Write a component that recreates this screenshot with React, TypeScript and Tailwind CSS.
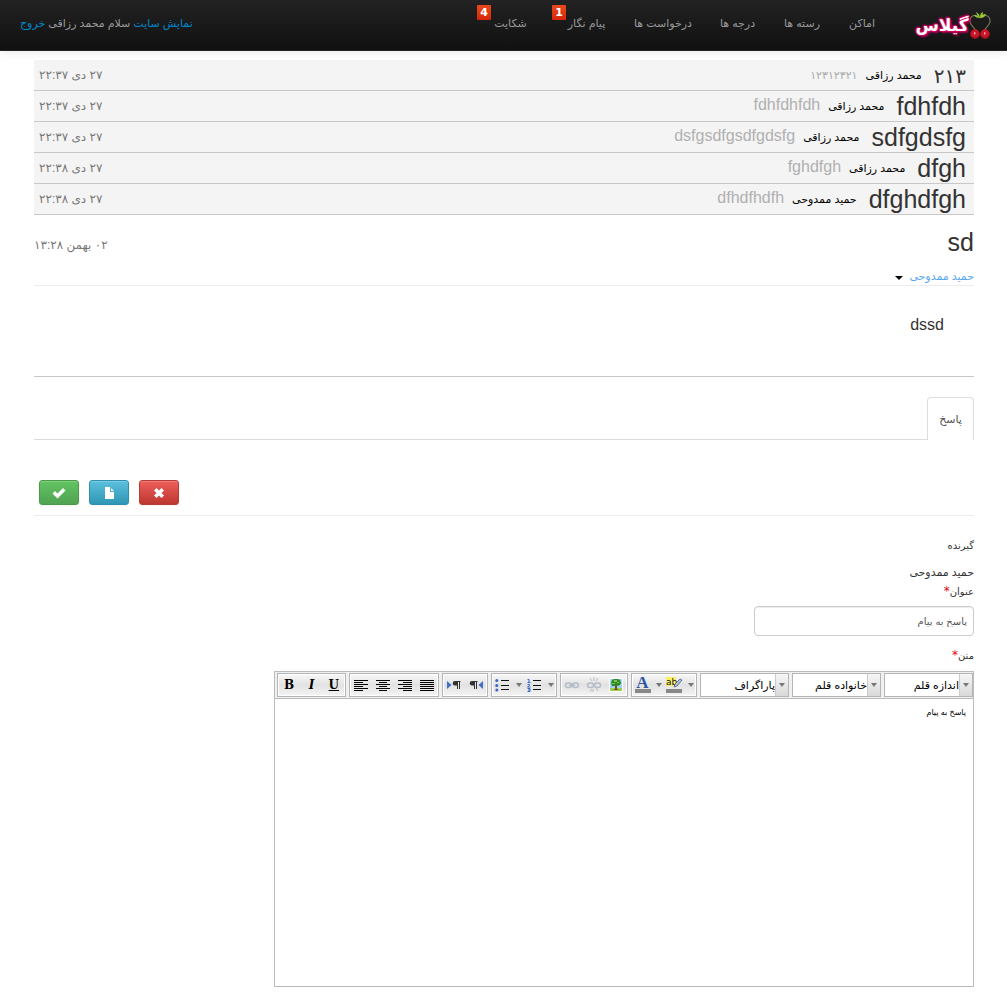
import React from "react";

const navItems = [
  { label: "اماکن", width: "w-[56px]" },
  { label: "رسته ها", width: "w-[64px]" },
  { label: "درجه ها", width: "w-[65px]" },
  { label: "درخواست ها", width: "w-[84px]" },
  { label: "پیام نگار", width: "w-[69px]", badge: "1" },
  { label: "شکایت", width: "w-[75px] pr-2", badge: "4" },
];

const messages = [
  { title: "۲۱۳", sender: "محمد رزاقی", body: "۱۲۳۱۲۳۲۱", date: "۲۷ دی ۲۲:۳۷", fa: true },
  { title: "fdhfdh", sender: "محمد رزاقی", body: "fdhfdhfdh", date: "۲۷ دی ۲۲:۳۷" },
  { title: "sdfgdsfg", sender: "محمد رزاقی", body: "dsfgsdfgsdfgdsfg", date: "۲۷ دی ۲۲:۳۷" },
  { title: "dfgh", sender: "محمد رزاقی", body: "fghdfgh", date: "۲۷ دی ۲۲:۳۸" },
  { title: "dfghdfgh", sender: "حمید ممدوحی", body: "dfhdfhdfh", date: "۲۷ دی ۲۲:۳۸" },
];

function Cherries() {
  return (
    <svg width="22" height="30" viewBox="0 0 22 30" aria-hidden="true">
      <path d="M11 8C6 3 1 6 1 11c0 5 6 7 7 12M11 8c5-5 10-2 10 3 0 5-6 7-7 12" fill="none" stroke="#77765a" strokeWidth="1.2" />
      <path d="M11 8C9 7 8 5 7 2c2 1 4 3 4 6zM11 8c1-3 3-4 6-4-1 3-3 4-6 4zM10 8C8 8 6 7 5 5c2 0 4 1 5 3zM11 7c0-3 1-4 3-5 0 3-1 4-3 5z" fill="#9aca2c" />
      <circle cx="6" cy="24" r="4.7" fill="#cc1526" />
      <circle cx="16" cy="24" r="4.7" fill="#cc1526" />
      <path d="M2 26a4.700 4.700 0 0 0 8 0M12 26a4.700 4.700 0 0 0 8 0" fill="none" stroke="#86101c" strokeWidth="1.200" />
      <path d="M5 22l2 1-2 2zM15 22l2 1-2 2z" fill="#ffb0b4" />
    </svg>
  );
}

function Group({ width, children }: { width: string; children: React.ReactNode }) {
  return (
    <div className={`${width} flex h-6 shrink-0 items-center justify-around border border-[#b5b5b5] bg-linear-to-b from-[#f8f8f8] via-[#e2e2e2] to-[#f4f4f4] shadow-[inset_0_0_0_1px_#fff]`}>
      {children}
    </div>
  );
}

function Tool({ name, children, narrow }: { name: string; children: React.ReactNode; narrow?: boolean }) {
  return (
    <button type="button" aria-label={name} title={name} className={`${narrow ? "w-2.5" : "w-5"} flex h-5 items-center justify-center`}>
      {children}
    </button>
  );
}

function Arrow() {
  return (
    <svg width="6" height="4" viewBox="0 0 6 4" aria-hidden="true">
      <path d="M0 0h6L3 4z" fill="#777" />
    </svg>
  );
}

function Lines({ rows }: { rows: number[][] }) {
  return (
    <svg width="14" height="11" viewBox="0 0 14 11" shapeRendering="crispEdges" aria-hidden="true">
      {rows.map(([x, w], i) => (
        <rect key={i} x={x} y={i * 2} width={w} height="1" fill="#000" />
      ))}
    </svg>
  );
}

function Pilcrow({ flip }: { flip?: boolean }) {
  return (
    <svg width="14" height="10" viewBox="0 0 14 10" aria-hidden="true">
      <path d={flip ? "M14 1v8L9.500 5z" : "M0 1v8l4.500-4z"} fill="#3f6fc4" />
      <path d={flip ? "M7.500 1v8M5.500 1v8" : "M12.500 1v8M10.500 1v8"} stroke="#333" />
      <path d={flip ? "M8.500 1H3a2.300 2.300 0 0 0 0 4.600h2V2h3.500z" : "M13.500 1H8a2.300 2.300 0 0 0 0 4.600h2V2h3.500z"} fill="#333" />
    </svg>
  );
}

function List({ numbered }: { numbered?: boolean }) {
  return (
    <svg width="15" height="14" viewBox="0 0 15 14" aria-hidden="true">
      <path d="M6 2.500h8M6 7.500h8M6 11.500h8" stroke="#111" />
      {numbered ? (
        <path d="M.5 1.500H2V4M.5 4.500h3M.5 6.500h2v1l-2 1.500h3M.5 10.500h2.500v1.500H1M3 12v1.500H.5" fill="none" stroke="#3567c4" />
      ) : (
        <g fill="#3567c4">
          <circle cx="1.800" cy="2.500" r="1.500" />
          <circle cx="1.800" cy="7.500" r="1.500" />
          <circle cx="1.800" cy="12" r="1.500" />
        </g>
      )}
    </svg>
  );
}

function Link({ broken }: { broken?: boolean }) {
  return (
    <svg width="16" height="16" viewBox="0 0 16 16" fill="none" stroke="#b4bcc8" aria-hidden="true">
      <rect x="1.500" y="6" width="6" height="4.500" rx="2.200" strokeWidth="1.400" />
      <rect x="8.500" y="6" width="6" height="4.500" rx="2.200" strokeWidth="1.400" />
      {broken ? <path d="M8 0v4M4 1l2 3M12 1l-2 3M7 12v3M4 15l2-3M12 14l-2-3" /> : <path d="M5 8.300h6" strokeWidth="1.500" />}
    </svg>
  );
}

function Tree() {
  return (
    <svg width="14" height="14" viewBox="0 0 14 14" className="shrink-0" aria-hidden="true">
      <path fill="#fff" d="M0 0h14v14H0z" />
      <path fill="#9fd2f7" d="M1 1h12v9H1z" />
      <path fill="#9ed04f" d="M1 10h12v3H1z" />
      <path fill="#7a4a22" d="M6 7h2v4l2 1H4l2-1z" />
      <path fill="#2f8a26" d="M5 1h4l2 1 1 3-1 2-3 1H6L3 8 2 5l1-3z" />
      <path fill="#79c64a" d="M5 2h3v2H5zM8 4h2v1H8zM3 5h3v1H3z" />
    </svg>
  );
}

function Highlight() {
  return (
    <svg width="17" height="16" viewBox="0 0 17 16" aria-hidden="true">
      <path fill="#fbf06a" d="M0 0h10v9H0z" />
      <text x="0" y="8" fontSize="9" fontFamily="DejaVu Sans" fill="#111">ab</text>
      <path fill="#a9c3df" stroke="#45617f" strokeWidth=".8" d="M14 2l2 1-5 6-3 1 1-3z" />
      <path fill="#888" d="M0 12h16v4H0z" />
    </svg>
  );
}

function Picker({ id, label }: { id: string; label: string }) {
  return (
    <div className="flex h-6 w-[89px] shrink-0 items-stretch border border-[#b5b5b5] bg-white" dir="rtl">
      <span className="flex w-[13px] shrink-0 items-center justify-center border-l border-[#ccc] bg-linear-to-b from-[#f6f6f6] to-[#d9d9d9]">
        <Arrow />
      </span>
      <select id={id} aria-label={label} className="min-w-0 flex-1 appearance-none bg-white text-[11px] text-black outline-none">
        <option>{label}</option>
      </select>
    </div>
  );
}

const actionBase = "flex h-[25px] w-10 items-center justify-center rounded-[3px] border text-white shadow-[inset_0_1px_0_rgba(255,255,255,.2),0_1px_2px_rgba(0,0,0,.05)]";

export default function App() {
  return (
    <div dir="rtl" className="min-h-screen bg-white font-['Liberation_Sans','DejaVu_Sans',sans-serif] text-[11px] leading-5 text-[#333]">
      <header className="flex h-[51px] items-start justify-between border-b border-[#252525] bg-linear-to-b from-[#222] to-[#111] pr-4 pl-5 text-[#999] shadow-[0_1px_10px_rgba(0,0,0,.1)]">
        <div className="flex items-start">
          <a href="#home" className="flex items-start pt-2.5" aria-label="گیلاس">
            <Cherries />
            <span className="w-[54px] pt-1 text-center text-[17px] leading-6 font-bold whitespace-nowrap text-white [text-shadow:1px_0_1px_#d4005f,-1px_0_1px_#d4005f,0_1px_1px_#d4005f,0_-1px_1px_#d4005f,2px_2px_2px_#b00058,-1px_-1px_2px_#d4005f]">گیلاس</span>
          </a>
          <nav className="mr-[25px] flex">
            {navItems.map((item) => (
              <a key={item.label} href="#nav" className={`${item.width} relative pt-[13px] text-center whitespace-nowrap`}>
                {item.label}
                {item.badge && (
                  <span className="absolute top-[5px] left-0 h-[15px] w-3.5 rounded-[1px] bg-linear-to-b from-[#e8481c] to-[#d62408] text-center font-['DejaVu_Sans'] text-[11px] leading-[15px] font-bold text-white">{item.badge}</span>
                )}
              </a>
            ))}
          </nav>
        </div>
        <div className="pt-[13px] whitespace-nowrap">
          <a href="#site" className="text-[#08c]">نمایش سایت</a> سلام محمد رزاقی <a href="#exit" className="text-[#08c]">خروج</a>
        </div>
      </header>

      <main className="pt-[9px] pr-[33px] pl-[34px]">
        <ul>
          {messages.map((m, i) => (
            <li key={i} className="flex h-[31px] items-center border-b border-[#c8c8c8] bg-[#f4f4f4] pr-2 pl-[5px]">
              <h3 className={m.fa ? "pt-0.5 text-xl leading-7" : "text-[25px] leading-[30px]"}>{m.title}</h3>
              <span className="mr-3 text-black">{m.sender}</span>
              <span className={m.fa ? "mr-2 text-[11px] text-[#aaa]" : "mr-2 pb-0.5 text-base leading-5 text-[#b0b0b0]"}>{m.body}</span>
              <time className="mr-auto text-xs leading-5 text-[#777]">{m.date}</time>
            </li>
          ))}
        </ul>

        <section className="border-b border-[#c8c8c8]">
          <div className="flex items-start justify-between pt-3">
            <h3 className="text-[25px] leading-[31px]">sd</h3>
            <time className="pt-2 text-xs leading-5 text-[#777]">۰۲ بهمن ۱۳:۲۸</time>
          </div>
          <div className="flex h-7 items-center gap-1.5 border-b border-[#eee] pt-2">
            <a href="#sender" className="text-[#5ba7ee]">حمید ممدوحی</a>
            <button type="button" aria-label="گزینه ها" className="pt-1">
              <svg width="8" height="4" viewBox="0 0 8 4" className="block" aria-hidden="true"><path d="M0 0h8L4 4z" fill="#000" /></svg>
            </button>
          </div>
          <p className="h-[90px] pt-[29px] pr-[30px] text-base leading-5">dssd</p>
        </section>

        <div className="mt-5 flex h-[43px] border-b border-[#ddd]" role="tablist">
          <button type="button" role="tab" aria-selected="true" className="-mb-px h-[43px] w-[47px] rounded-t border border-b-0 border-[#ddd] bg-white text-[#555]">پاسخ</button>
        </div>

        <div className="flex justify-end gap-2.5 border-b border-[#eee] pt-10 pb-2.5 pl-[5px]">
          <button type="button" aria-label="حذف" className={`${actionBase} border-[#b53b36] bg-linear-to-b from-[#ee5f5b] to-[#bd362f]`}>
            <svg width="12" height="12" viewBox="0 0 12 12" aria-hidden="true"><path d="M3.500 1L6 3.500 8.500 1 11 3.500 8.500 6 11 8.500 8.500 11 6 8.500 3.500 11 1 8.500 3.500 6 1 3.500z" fill="#fff" /></svg>
          </button>
          <button type="button" aria-label="پیش نویس" className={`${actionBase} border-[#2f8fae] bg-linear-to-b from-[#5bc0de] to-[#2f96b4]`}>
            <svg width="9" height="12" viewBox="0 0 9 12" aria-hidden="true"><path d="M0 0h5v5h4v7H0zM6 1l3 3H6z" fill="#fff" /></svg>
          </button>
          <button type="button" aria-label="ارسال" className={`${actionBase} border-[#4a9a4a] bg-linear-to-b from-[#62c462] to-[#51a351]`}>
            <svg width="14" height="12" viewBox="0 0 14 12" aria-hidden="true"><path d="M.5 6.500L3 4l2.500 2.500L11 1l2.500 2.500-8 8z" fill="#fff" /></svg>
          </button>
        </div>

        <form className="pt-5 text-[10px]">
          <p className="leading-5">گیرنده</p>
          <p className="pt-1.5 text-[11px] leading-5">حمید ممدوحی</p>
          <label htmlFor="subject" className="block leading-5">عنوان<span className="font-['DejaVu_Sans'] text-xs leading-4 text-red-600">*</span></label>
          <input id="subject" defaultValue="پاسخ به پیام" className="mt-1 block h-[30px] w-[220px] rounded border border-[#ccc] px-1.5 text-[10px] text-[#555] shadow-[inset_0_1px_1px_rgba(0,0,0,.075)] outline-none" />
          <label htmlFor="body" className="mt-2.5 mb-[5px] block leading-5">متن<span className="font-['DejaVu_Sans'] text-xs leading-4 text-red-600">*</span></label>

          <div className="w-[700px] border border-[#bbb]">
            <div dir="ltr" className="flex h-[27px] items-center gap-[3px] border-b border-[#bbb] bg-[#f0f0f0] pl-0.5">
              <Group width="w-[69px]">
                <Tool name="Bold"><b className="font-['DejaVu_Serif'] text-xs text-black">B</b></Tool>
                <Tool name="Italic"><b className="font-['DejaVu_Serif'] text-xs text-black italic">I</b></Tool>
                <Tool name="Underline"><b className="font-['DejaVu_Serif'] text-xs text-black underline">U</b></Tool>
              </Group>
              <Group width="w-[90px]">
                <Tool name="Align left"><Lines rows={[[0, 14], [0, 9], [0, 14], [0, 9], [0, 14], [0, 9]]} /></Tool>
                <Tool name="Align center"><Lines rows={[[0, 14], [3, 8], [0, 14], [3, 8], [0, 14], [3, 8]]} /></Tool>
                <Tool name="Align right"><Lines rows={[[0, 14], [5, 9], [0, 14], [5, 9], [0, 14], [5, 9]]} /></Tool>
                <Tool name="Justify"><Lines rows={[[0, 14], [0, 14], [0, 14], [0, 14], [0, 14], [0, 14]]} /></Tool>
              </Group>
              <Group width="w-[46px]">
                <Tool name="Left to right"><Pilcrow /></Tool>
                <Tool name="Right to left"><Pilcrow flip /></Tool>
              </Group>
              <Group width="w-[66px]">
                <Tool name="Bullets"><List /></Tool>
                <Tool name="Bullet style" narrow><Arrow /></Tool>
                <Tool name="Numbering"><List numbered /></Tool>
                <Tool name="Number style" narrow><Arrow /></Tool>
              </Group>
              <Group width="w-[68px]">
                <Tool name="Link"><Link /></Tool>
                <Tool name="Unlink"><Link broken /></Tool>
                <Tool name="Image"><Tree /></Tool>
              </Group>
              <Group width="w-[66px]">
                <Tool name="Text color">
                  <span className="w-4 border-b-4 border-[#888] text-center font-['Liberation_Serif'] text-[17px] leading-3 font-bold text-[#2d55a0]">A</span>
                </Tool>
                <Tool name="Text colors" narrow><Arrow /></Tool>
                <Tool name="Highlight"><Highlight /></Tool>
                <Tool name="Highlight colors" narrow><Arrow /></Tool>
              </Group>
              <Picker id="format" label="پاراگراف" />
              <Picker id="family" label="خانواده قلم" />
              <Picker id="size" label="اندازه قلم" />
            </div>
            <textarea id="body" defaultValue="پاسخ به پیام" className="block h-[287px] w-full resize-none px-[7px] py-1 text-[8px] leading-5 text-black outline-none" />
          </div>
        </form>
      </main>
    </div>
  );
}
